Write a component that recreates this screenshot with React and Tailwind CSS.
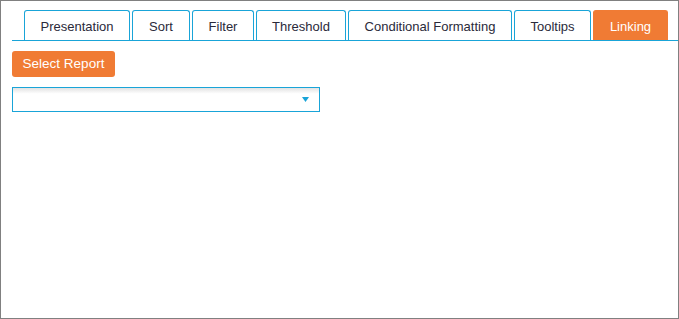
const TABS = [
  { label: 'Presentation', w: 106 },
  { label: 'Sort', w: 58 },
  { label: 'Filter', w: 62 },
  { label: 'Threshold', w: 90 },
  { label: 'Conditional Formatting', w: 164 },
  { label: 'Tooltips', w: 77 },
  { label: 'Linking', w: 75, active: true },
]

export default function App() {
  return (
    <div className="w-[679px] h-[319px] border border-[#808080] bg-white font-['Liberation_Sans',Arial,sans-serif] text-[13px] text-[#333]">
      <div className="flex items-end gap-[2px] pt-[9px] border-b border-[#19a4d8] ml-[11px] pl-[12px]">
        {TABS.map((t) => (
          <div
            key={t.label}
            style={{ width: t.w }}
            className={`h-[30px] pt-[3px] flex items-center justify-center rounded-t-[3px] border border-b-0 ${
              t.active
                ? 'bg-[#f07b34] border-[#f07b34] text-white'
                : 'bg-white border-[#19a4d8] text-[#2a2a3a]'
            }`}
          >
            {t.label}
          </div>
        ))}
      </div>
      <div className="pl-[11px] pt-[10px]">
        <button className="h-[26px] w-[103px] pt-[1px] rounded-[3px] bg-[#f07b34] text-white text-[13.5px] flex items-center justify-center">
          Select Report
        </button>
        <div className="mt-[10px] w-[308px] h-[25px] border border-[#19a4d8] bg-gradient-to-b from-[#e2e2e2] via-white via-[25%] to-white flex items-center justify-end pr-[10px]">
          <svg width="7" height="5" viewBox="0 0 7 5">
            <path d="M0 0 H7 L3.5 5 Z" fill="#19a4d8" />
          </svg>
        </div>
      </div>
    </div>
  )
}
